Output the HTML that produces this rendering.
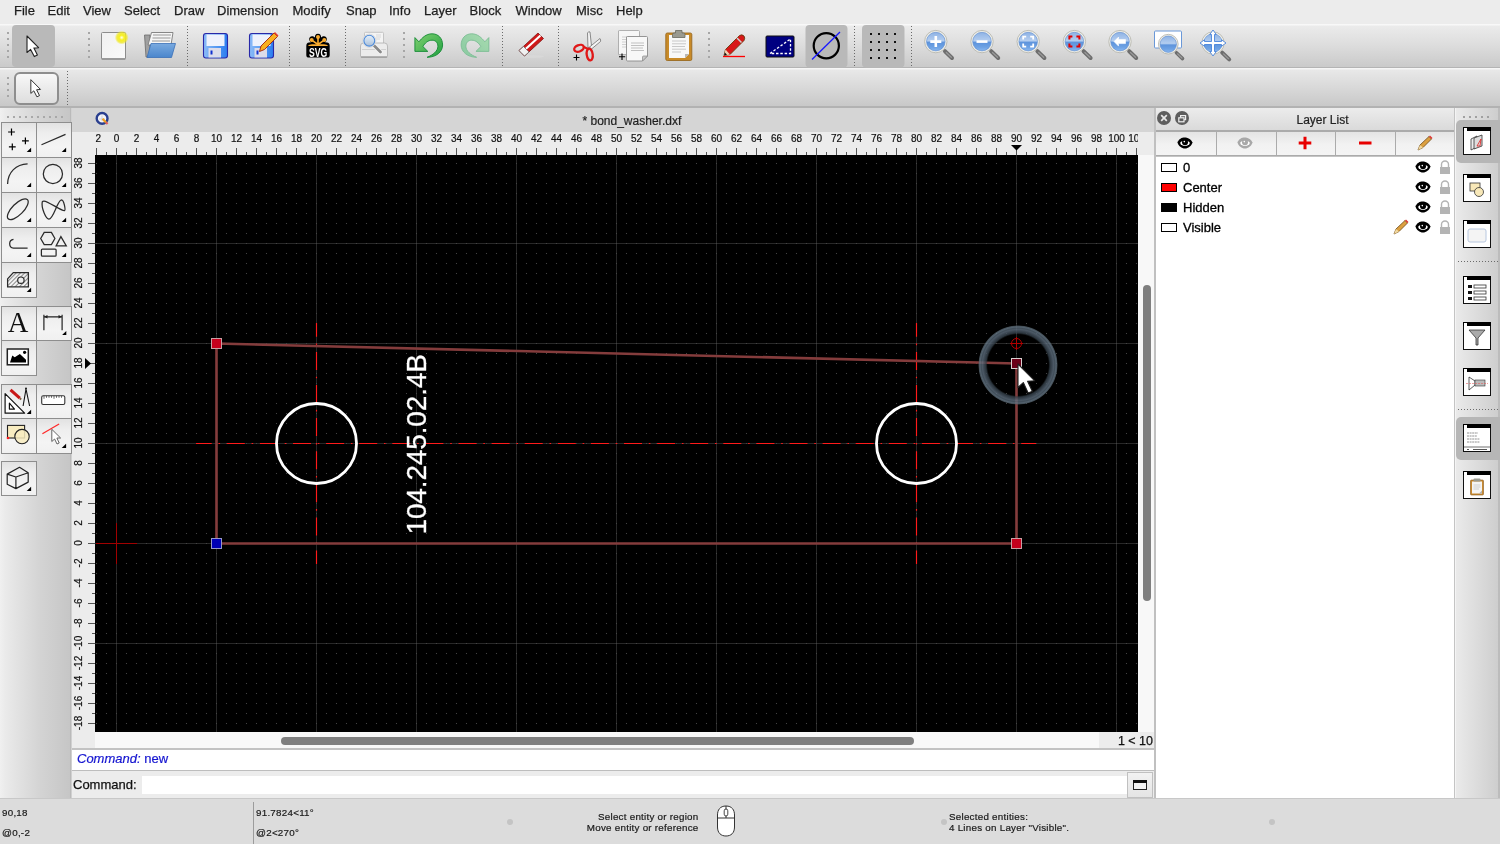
<!DOCTYPE html><html><head><meta charset="utf-8"><style>
*{box-sizing:border-box}
body{margin:0;width:1500px;height:844px;overflow:hidden;position:relative;will-change:transform;background:#ececec;font-family:"Liberation Sans",sans-serif;color:#1a1a1a}
.a{position:absolute}
.mi{position:absolute;top:2.5px;font-size:13px;line-height:16px;color:#1e1e1e;-webkit-text-stroke:0.25px #1e1e1e}
.rl{position:absolute;font-size:10px;line-height:10px;color:#111;text-align:center;width:30px;-webkit-text-stroke:0.2px #111}
.tb{position:absolute;width:34px;height:34px;border:1px solid #9c9c9c;background:linear-gradient(#e4e4e4,#f6f6f6 45%,#f3f3f3 80%,#ececec)}
.tb svg{position:absolute;left:0;top:0}
.sb{position:absolute;font-size:9.8px;line-height:11px;color:#1a1a1a;letter-spacing:0.25px;-webkit-text-stroke:0.2px #1a1a1a}

</style></head><body>
<div class="a" style="left:0;top:0;width:1500px;height:24px;background:#ececec"></div>
<div class="mi" style="left:14px">File</div>
<div class="mi" style="left:47.5px">Edit</div>
<div class="mi" style="left:83px">View</div>
<div class="mi" style="left:124px">Select</div>
<div class="mi" style="left:174px">Draw</div>
<div class="mi" style="left:217px">Dimension</div>
<div class="mi" style="left:292.5px">Modify</div>
<div class="mi" style="left:346px">Snap</div>
<div class="mi" style="left:389px">Info</div>
<div class="mi" style="left:424px">Layer</div>
<div class="mi" style="left:469.5px">Block</div>
<div class="mi" style="left:515.5px">Window</div>
<div class="mi" style="left:576px">Misc</div>
<div class="mi" style="left:616px">Help</div>
<div class="a" style="left:0;top:24px;width:1500px;height:44px;background:linear-gradient(#f8f8f8 0,#f8f8f8 1px,#ebebeb 2px,#dedede 45%,#cacaca 97%,#b4b4b4 97%)"></div>
<div class="a" style="left:0;top:68px;width:1500px;height:40px;background:linear-gradient(#f6f6f6 0,#f6f6f6 1px,#e8e8e8 2px,#dadada 45%,#c8c8c8 96%,#b2b2b2 96%)"></div>
<div class="a" style="left:7px;top:32px;width:2px;height:2px;background:#a6a6a6"></div>
<div class="a" style="left:7px;top:38px;width:2px;height:2px;background:#a6a6a6"></div>
<div class="a" style="left:7px;top:44px;width:2px;height:2px;background:#a6a6a6"></div>
<div class="a" style="left:7px;top:50px;width:2px;height:2px;background:#a6a6a6"></div>
<div class="a" style="left:7px;top:56px;width:2px;height:2px;background:#a6a6a6"></div>
<div class="a" style="left:12px;top:25px;width:43px;height:42px;border-radius:4px;background:#b9b9b9"></div>
<svg class="a" style="left:25px;top:34px" width="20" height="24" viewBox="0 0 20 24"><path d="M2 2 L2 18.5 L5.6 15.4 L9.3 22.6 L12.4 21.1 L8.9 14.1 L13.6 13.7 Z" fill="#fff" stroke="#222" stroke-width="1.1" stroke-linejoin="round"/></svg>
<div class="a" style="left:88px;top:32px;width:2px;height:2px;background:#a6a6a6"></div>
<div class="a" style="left:88px;top:38px;width:2px;height:2px;background:#a6a6a6"></div>
<div class="a" style="left:88px;top:44px;width:2px;height:2px;background:#a6a6a6"></div>
<div class="a" style="left:88px;top:50px;width:2px;height:2px;background:#a6a6a6"></div>
<div class="a" style="left:88px;top:56px;width:2px;height:2px;background:#a6a6a6"></div>
<div class="a" style="left:403px;top:32px;width:2px;height:2px;background:#a6a6a6"></div>
<div class="a" style="left:403px;top:38px;width:2px;height:2px;background:#a6a6a6"></div>
<div class="a" style="left:403px;top:44px;width:2px;height:2px;background:#a6a6a6"></div>
<div class="a" style="left:403px;top:50px;width:2px;height:2px;background:#a6a6a6"></div>
<div class="a" style="left:403px;top:56px;width:2px;height:2px;background:#a6a6a6"></div>
<div class="a" style="left:708px;top:32px;width:2px;height:2px;background:#a6a6a6"></div>
<div class="a" style="left:708px;top:38px;width:2px;height:2px;background:#a6a6a6"></div>
<div class="a" style="left:708px;top:44px;width:2px;height:2px;background:#a6a6a6"></div>
<div class="a" style="left:708px;top:50px;width:2px;height:2px;background:#a6a6a6"></div>
<div class="a" style="left:708px;top:56px;width:2px;height:2px;background:#a6a6a6"></div>
<div class="a" style="left:187px;top:26px;width:1px;height:41px;background:repeating-linear-gradient(#6a6a6a 0 1px,transparent 1px 3px)"></div>
<div class="a" style="left:289px;top:26px;width:1px;height:41px;background:repeating-linear-gradient(#6a6a6a 0 1px,transparent 1px 3px)"></div>
<div class="a" style="left:345px;top:26px;width:1px;height:41px;background:repeating-linear-gradient(#6a6a6a 0 1px,transparent 1px 3px)"></div>
<div class="a" style="left:502px;top:26px;width:1px;height:41px;background:repeating-linear-gradient(#6a6a6a 0 1px,transparent 1px 3px)"></div>
<div class="a" style="left:558px;top:26px;width:1px;height:41px;background:repeating-linear-gradient(#6a6a6a 0 1px,transparent 1px 3px)"></div>
<div class="a" style="left:854px;top:26px;width:1px;height:41px;background:repeating-linear-gradient(#6a6a6a 0 1px,transparent 1px 3px)"></div>
<div class="a" style="left:911px;top:26px;width:1px;height:41px;background:repeating-linear-gradient(#6a6a6a 0 1px,transparent 1px 3px)"></div>
<svg class="a" style="left:0;top:0" width="1500" height="108" viewBox="0 0 1500 108"><defs><radialGradient id="glow"><stop offset="0" stop-color="#fffff0"/><stop offset="0.35" stop-color="#f8f020"/><stop offset="0.7" stop-color="#f0e820" stop-opacity="0.8"/><stop offset="1" stop-color="#f0e820" stop-opacity="0"/></radialGradient><linearGradient id="paper" x1="0" y1="0" x2="1" y2="1"><stop offset="0" stop-color="#f0f0f0"/><stop offset="1" stop-color="#fafafa"/></linearGradient><linearGradient id="fold" x1="0" y1="0" x2="0" y2="1"><stop offset="0" stop-color="#7aaae0"/><stop offset="1" stop-color="#4a86cc"/></linearGradient><linearGradient id="flop" x1="0" y1="0" x2="1" y2="0"><stop offset="0" stop-color="#8cbcf8"/><stop offset="0.5" stop-color="#5a9cf2"/><stop offset="1" stop-color="#2a7cf0"/></linearGradient><linearGradient id="lens" x1="0" y1="0" x2="0" y2="1"><stop offset="0" stop-color="#8eb2e4"/><stop offset="0.45" stop-color="#b4cef0"/><stop offset="0.55" stop-color="#5e94dc"/><stop offset="0.8" stop-color="#6ea2e4"/><stop offset="1" stop-color="#8ab8f0"/></linearGradient><linearGradient id="green1" x1="0" y1="0" x2="1" y2="1"><stop offset="0" stop-color="#80d070"/><stop offset="1" stop-color="#20a040"/></linearGradient><linearGradient id="green2" x1="0" y1="0" x2="1" y2="1"><stop offset="0" stop-color="#a8dcb0"/><stop offset="1" stop-color="#88c8a0"/></linearGradient></defs><rect x="101.5" y="32.5" width="24" height="27" rx="1" fill="url(#paper)" stroke="#8c8c8c" stroke-width="1"/><rect x="102" y="58" width="23" height="2" fill="#9a9a9a"/><circle cx="121.7" cy="37.6" r="7" fill="url(#glow)"/><path d="M144.5 35 L150 35 L150 57 L146 57Z" fill="#a0a0a0" stroke="#6a6a6a" stroke-width="0.8"/><path d="M151.5 32.5 L173 32.5 L171 45 L148 45Z" fill="#f6f6f6" stroke="#7a7a7a" stroke-width="0.9"/><path d="M153 35 L171 35 M152.5 38 L170.5 38 M152 41 L170 41" stroke="#b8b8b8" stroke-width="1.6"/><path d="M151 43.5 L175.5 43.5 L171.5 57.5 L147 57.5Z" fill="url(#fold)" stroke="#3a70b8" stroke-width="0.8"/><rect x="203.5" y="33.5" width="24" height="24.5" rx="2.5" fill="url(#flop)" stroke="#2828a8" stroke-width="1.1"/><rect x="206.5" y="34.5" width="18" height="11.5" fill="#eef2fc"/><rect x="208.5" y="48" width="12.5" height="9.5" fill="#dcdcea"/><rect x="210.5" y="50.5" width="2" height="4" fill="#1030d0"/><rect x="249.5" y="33.5" width="24" height="24.5" rx="2.5" fill="url(#flop)" stroke="#2828a8" stroke-width="1.1"/><rect x="252.5" y="34.5" width="18" height="11.5" fill="#eef2fc"/><rect x="254.5" y="48" width="12.5" height="9.5" fill="#dcdcea"/><rect x="256.5" y="50.5" width="2" height="4" fill="#1030d0"/><path d="M259.5 51.5 L261 46 L274 33 L277.5 36.5 L264.5 49.5Z" fill="#f8b020" stroke="#a02010" stroke-width="0.9"/><path d="M274 33 L277.5 36.5 L278.5 35.5 L275 32Z" fill="#e84030"/><path d="M318 33.8 C320.5 33.8 321.3 36 321 37.6 L322.5 36.6 C324.5 35.4 327.4 37 326.8 39.8 C326.6 41 325.8 41.8 325 42.3 L327 42.6 Q329.7 43 329.7 46 L329.7 55 Q329.7 57.6 327 57.6 L309 57.6 Q306.3 57.6 306.3 55 L306.3 46 Q306.3 43 309 42.6 L311 42.3 C310.2 41.8 309.4 41 309.2 39.8 C308.6 37 311.5 35.4 313.5 36.6 L315 37.6 C314.7 36 315.5 33.8 318 33.8Z" fill="#000"/><g stroke="#f8ac30" stroke-linecap="round"><path d="M318 44.5 L318 37 M318 44.5 L311.8 40.2 M318 44.5 L324.2 40.2" stroke-width="1.6"/><circle cx="318" cy="36.9" r="1.2" stroke-width="1.6" fill="#f8ac30"/><circle cx="311.7" cy="40" r="1.2" stroke-width="1.6" fill="#f8ac30"/><circle cx="324.3" cy="40" r="1.2" stroke-width="1.6" fill="#f8ac30"/></g><path d="M307.8 46 Q309 44.2 312 44.2 L324 44.2 Q327 44.2 328.3 46Z" fill="#f8ac30"/><text x="318" y="57" font-family="Liberation Sans" font-weight="bold" font-size="13.6" text-anchor="middle" fill="#fff" textLength="18.2" lengthAdjust="spacingAndGlyphs">SVG</text><linearGradient id="lens2" x1="0" y1="0" x2="0" y2="1"><stop offset="0" stop-color="#e4eef8"/><stop offset="0.55" stop-color="#c4d6ea"/><stop offset="1" stop-color="#a8bcd4"/></linearGradient><rect x="364.5" y="32.3" width="19" height="14" rx="1" fill="#f4f4f4" stroke="#c4c4c4" stroke-width="1"/><path d="M376 35 H381 M376 37 H381 M376 39 H380" stroke="#d8d8d8" stroke-width="1"/><path d="M360.5 46 Q360.5 43 363.5 43 L384.5 43 Q387.5 43 387.5 46 L387.5 56.5 Q387.5 57.5 386.5 57.5 L361.5 57.5 Q360.5 57.5 360.5 56.5Z" fill="#ececec" stroke="#b4b4b4" stroke-width="0.9"/><rect x="362" y="49" width="24" height="1" fill="#d0d0d0"/><rect x="361" y="56" width="26" height="2" fill="#9a9a9a" opacity="0.7"/><path d="M374 45.5 L380.5 52" stroke="#f4f4f4" stroke-width="4.4" stroke-linecap="round"/><path d="M374 45.5 L380.5 52" stroke="#8a8a8a" stroke-width="2.8" stroke-linecap="round"/><circle cx="369.3" cy="40.7" r="6.6" fill="#f8f8f8" stroke="#d0d0d0" stroke-width="0.8"/><circle cx="369.3" cy="40.7" r="5.4" fill="url(#lens2)" stroke="#4a88d8" stroke-width="1.1"/><path d="M414.9 37.6 L418.9 41.8 C422 38 426 33.8 432 33.8 C438.5 33.8 442.6 38.5 442.6 45 C442.6 52 436 57.3 427.1 57.3 C433 55 437.9 51 437.9 46.3 C437.9 42.5 435.5 40.2 432 40.2 C428 40.2 425 43 422.9 46.5 L427.8 51.4 L414.9 51.4 Z" fill="url(#green1)" stroke="#148a34" stroke-width="0.9" stroke-linejoin="round"/><path d="M414.9 37.6 L418.9 41.8 C422 38 426 33.8 432 33.8 C438.5 33.8 442.6 38.5 442.6 45 C442.6 52 436 57.3 427.1 57.3 C433 55 437.9 51 437.9 46.3 C437.9 42.5 435.5 40.2 432 40.2 C428 40.2 425 43 422.9 46.5 L427.8 51.4 L414.9 51.4 Z" transform="translate(903.75 0) scale(-1 1)" fill="url(#green2)" stroke="#7cbc94" stroke-width="0.9" stroke-linejoin="round"/><ellipse cx="532" cy="56.5" rx="12" ry="1.5" fill="#d8d8d8"/><path d="M519 50.5 L538 33 L543.5 38.5 L524.5 56Z" fill="#d01818" stroke="#801010" stroke-width="0.8"/><path d="M521.5 52.8 L540.5 35.5" stroke="#fff" stroke-width="2.2"/><path d="M519 50.5 L523.5 46.5 L529 52 L524.5 56Z" fill="#f0f0f0" stroke="#707070" stroke-width="0.8"/><path d="M588 48 L587.5 33 Q588.5 31 590 32 L591.5 46Z" fill="#f4f4f4" stroke="#707070" stroke-width="0.8"/><path d="M589.5 47 L600 38.5 Q601 40 600.5 41.5 L591.5 49Z" fill="#f4f4f4" stroke="#707070" stroke-width="0.8"/><ellipse cx="579" cy="48.3" rx="5" ry="3.2" transform="rotate(-22 579 48.3)" fill="none" stroke="#e01818" stroke-width="2.3"/><ellipse cx="589.7" cy="54.5" rx="3" ry="6" transform="rotate(-8 589.7 54.5)" fill="none" stroke="#e01818" stroke-width="2.3"/><path d="M583 46.5 L589 49.5" stroke="#e01818" stroke-width="2"/><path d="M576.5 54.5 V60.5 M573.5 57.5 H579.5" stroke="#000" stroke-width="1.1"/><path d="M618.5 31 Q618.5 30.5 619.5 30.5 L638.5 30.5 Q639.5 30.5 639.5 31.5 L639.5 54.5 L618.5 54.5Z" fill="#f6f6f6" stroke="#a8a8a8" stroke-width="0.9"/><path d="M622 37 H634 M622 39.5 H634 M622 42 H634 M622 44.5 H634 M622 47 H634" stroke="#d0d0d0" stroke-width="1"/><path d="M626.5 37 Q626.5 36.5 627.5 36.5 L646.5 36.5 Q647.5 36.5 647.5 37.5 L647.5 56 L642.5 61 L627.5 61 Q626.5 61 626.5 60Z" fill="#f8f8f8" stroke="#8a8a8a" stroke-width="0.9"/><path d="M642.5 61 L642.5 57 Q642.5 56 643.5 56 L647.5 56Z" fill="#c8c8c8" stroke="#8a8a8a" stroke-width="0.7"/><path d="M631 43 H644 M631 45.5 H644 M631 48 H643 M631 50.5 H644" stroke="#c0c0c0" stroke-width="1.1"/><path d="M622 53.5 V60 M619 56.8 H625.2" stroke="#000" stroke-width="1.1"/><rect x="665.8" y="33" width="26" height="27.5" rx="1.5" fill="#c88a28" stroke="#9a6a20" stroke-width="0.9"/><path d="M669 35 L689 35 L689 54 L685 58 L669 58Z" fill="#f8f8f8"/><path d="M685 58 L685 54 L689 54Z" fill="#b8b8b8"/><path d="M672 41 H686 M672 43.8 H686 M672 46.5 H685 M672 49.2 H686 M672 52 H681" stroke="#c8c8c8" stroke-width="1"/><path d="M672.5 37.5 L672.5 34.5 Q672.5 33 674 33 L675.5 33 L675.5 30.5 L682 30.5 L682 33 L683.5 33 Q685 33 685 34.5 L685 37.5Z" fill="#9a9a90" stroke="#6a6a60" stroke-width="0.8"/><path d="M723 56.5 H745" stroke="#ff0000" stroke-width="1.3"/><path d="M724 55.5 L725.5 49.5 L739.5 35.5 Q742 34 744 36 Q745.5 38 744 40.5 L730 54.5Z" fill="#d81818" stroke="#6a3a10" stroke-width="0.9"/><path d="M725.5 49.5 L730 54.5 L724 55.5Z" fill="#f0d0b0"/><path d="M724 55.5 L724.8 52.5 L727 54.8Z" fill="#111"/><path d="M737 38 L741.5 42.5" stroke="#d0d0d0" stroke-width="1.5"/><rect x="766" y="36" width="28" height="21" rx="1" fill="#000080" stroke="#111" stroke-width="1"/><path d="M770 53.5 L790.5 39 L790.5 53.5 Z" fill="none" stroke="#fff" stroke-width="1.3" stroke-dasharray="2.5 1.8"/><rect x="805.5" y="25" width="42" height="42.5" rx="4" fill="#b9b9b9"/><rect x="862" y="25" width="42.5" height="42.5" rx="4" fill="#b9b9b9"/><circle cx="826.3" cy="45.7" r="12.6" fill="none" stroke="#000" stroke-width="2.2"/><path d="M812 59.5 L840 32" stroke="#1818ff" stroke-width="1.3"/><rect x="870" y="33" width="2" height="2" fill="#111"/><rect x="878" y="33" width="2" height="2" fill="#111"/><rect x="886" y="33" width="2" height="2" fill="#111"/><rect x="894" y="33" width="2" height="2" fill="#111"/><rect x="870" y="41" width="2" height="2" fill="#111"/><rect x="878" y="41" width="2" height="2" fill="#111"/><rect x="886" y="41" width="2" height="2" fill="#111"/><rect x="894" y="41" width="2" height="2" fill="#111"/><rect x="870" y="49" width="2" height="2" fill="#111"/><rect x="878" y="49" width="2" height="2" fill="#111"/><rect x="886" y="49" width="2" height="2" fill="#111"/><rect x="894" y="49" width="2" height="2" fill="#111"/><rect x="870" y="57" width="2" height="2" fill="#111"/><rect x="878" y="57" width="2" height="2" fill="#111"/><rect x="886" y="57" width="2" height="2" fill="#111"/><rect x="894" y="57" width="2" height="2" fill="#111"/><path d="M945.0 51.2 L952.0 58.0" stroke="#6e6e6e" stroke-width="4.0" stroke-linecap="round"/><path d="M946.3 52.5 L951.3 57.3" stroke="#9a9a9a" stroke-width="1.2" stroke-linecap="round"/><circle cx="935.8" cy="41.6" r="11.2" fill="#eeeee8" stroke="#b8b8b0" stroke-width="0.9"/><circle cx="935.8" cy="41.6" r="9.3" fill="url(#lens)" stroke="#5a8ad0" stroke-width="0.6"/><path d="M935.8 36.1 V47.1 M930.3 41.6 H941.3" stroke="#fff" stroke-width="2.6"/><path d="M991.2 51.2 L998.2 58.0" stroke="#6e6e6e" stroke-width="4.0" stroke-linecap="round"/><path d="M992.5 52.5 L997.5 57.3" stroke="#9a9a9a" stroke-width="1.2" stroke-linecap="round"/><circle cx="982.0" cy="41.6" r="11.2" fill="#eeeee8" stroke="#b8b8b0" stroke-width="0.9"/><circle cx="982.0" cy="41.6" r="9.3" fill="url(#lens)" stroke="#5a8ad0" stroke-width="0.6"/><path d="M976.5 41.6 H987.5" stroke="#fff" stroke-width="2.6"/><path d="M1037.4 51.2 L1044.4 58.0" stroke="#6e6e6e" stroke-width="4.0" stroke-linecap="round"/><path d="M1038.7 52.5 L1043.7 57.3" stroke="#9a9a9a" stroke-width="1.2" stroke-linecap="round"/><circle cx="1028.2" cy="41.6" r="11.2" fill="#eeeee8" stroke="#b8b8b0" stroke-width="0.9"/><circle cx="1028.2" cy="41.6" r="9.3" fill="url(#lens)" stroke="#5a8ad0" stroke-width="0.6"/><path d="M1023.2 39.6 V36.6 H1026.2 M1030.2 36.6 H1033.2 V39.6 M1033.2 43.6 V46.6 H1030.2 M1026.2 46.6 H1023.2 V43.6" fill="none" stroke="#fff" stroke-width="1.8"/><path d="M1083.6000000000001 51.2 L1090.6000000000001 58.0" stroke="#6e6e6e" stroke-width="4.0" stroke-linecap="round"/><path d="M1084.9 52.5 L1089.9 57.3" stroke="#9a9a9a" stroke-width="1.2" stroke-linecap="round"/><circle cx="1074.4" cy="41.6" r="11.2" fill="#eeeee8" stroke="#b8b8b0" stroke-width="0.9"/><circle cx="1074.4" cy="41.6" r="9.3" fill="url(#lens)" stroke="#5a8ad0" stroke-width="0.6"/><path d="M1069.4 39.6 V36.6 H1072.4 M1076.4 36.6 H1079.4 V39.6 M1079.4 43.6 V46.6 H1076.4 M1072.4 46.6 H1069.4 V43.6" fill="none" stroke="#e00000" stroke-width="2"/><path d="M1129.2 51.2 L1136.2 58.0" stroke="#6e6e6e" stroke-width="4.0" stroke-linecap="round"/><path d="M1130.5 52.5 L1135.5 57.3" stroke="#9a9a9a" stroke-width="1.2" stroke-linecap="round"/><circle cx="1120" cy="41.6" r="11.2" fill="#eeeee8" stroke="#b8b8b0" stroke-width="0.9"/><circle cx="1120" cy="41.6" r="9.3" fill="url(#lens)" stroke="#5a8ad0" stroke-width="0.6"/><path d="M1114 41.6 L1118.5 37.1 V39.6 H1125.5 V43.6 H1118.5 V46.1Z" fill="#fff" stroke="#fff" stroke-width="0.6"/><rect x="1154.5" y="31" width="27" height="17" rx="1" fill="#fff" stroke="#6a98d8" stroke-width="1"/><path d="M1176.396 52.648 L1182.556 58.632000000000005" stroke="#6e6e6e" stroke-width="3.52" stroke-linecap="round"/><path d="M1177.54 53.792 L1181.94 58.016000000000005" stroke="#9a9a9a" stroke-width="1.2" stroke-linecap="round"/><circle cx="1168.3" cy="44.2" r="9.856" fill="#eeeee8" stroke="#b8b8b0" stroke-width="0.9"/><circle cx="1168.3" cy="44.2" r="8.184000000000001" fill="url(#lens)" stroke="#5a8ad0" stroke-width="0.6"/><path d="M1222.2 52.6 L1229.2 59.4" stroke="#6e6e6e" stroke-width="4.0" stroke-linecap="round"/><path d="M1223.5 53.9 L1228.5 58.7" stroke="#9a9a9a" stroke-width="1.2" stroke-linecap="round"/><circle cx="1213" cy="43" r="11.2" fill="#eeeee8" stroke="#b8b8b0" stroke-width="0.9"/><circle cx="1213" cy="43" r="9.3" fill="url(#lens)" stroke="#5a8ad0" stroke-width="0.6"/><path d="M1213 30 L1216.2 34.5 L1214.5 34.5 L1214.5 41.5 L1221.5 41.5 L1221.5 39.8 L1226 43 L1221.5 46.2 L1221.5 44.5 L1214.5 44.5 L1214.5 51.5 L1216.2 51.5 L1213 56 L1209.8 51.5 L1211.5 51.5 L1211.5 44.5 L1204.5 44.5 L1204.5 46.2 L1200 43 L1204.5 39.8 L1204.5 41.5 L1211.5 41.5 L1211.5 34.5 L1209.8 34.5Z" fill="#fff" stroke="#3a7ad8" stroke-width="0.8" stroke-linejoin="round"/></svg>
<div class="a" style="left:7px;top:77px;width:2px;height:2px;background:#a6a6a6"></div>
<div class="a" style="left:7px;top:83px;width:2px;height:2px;background:#a6a6a6"></div>
<div class="a" style="left:7px;top:89px;width:2px;height:2px;background:#a6a6a6"></div>
<div class="a" style="left:7px;top:95px;width:2px;height:2px;background:#a6a6a6"></div>
<div class="a" style="left:14px;top:72px;width:45px;height:33px;border-radius:6px;border:2px solid #8e8e8e;background:linear-gradient(#f8f8f8,#e8e8e8 60%,#dedede)"></div>
<svg class="a" style="left:29px;top:78px" width="17" height="20" viewBox="0 0 20 24"><path d="M2 2 L2 18.5 L5.6 15.4 L9.3 22.6 L12.4 21.1 L8.9 14.1 L13.6 13.7 Z" fill="#fff" stroke="#222" stroke-width="1.1" stroke-linejoin="round"/></svg>
<div class="a" style="left:67px;top:71px;width:1px;height:35px;background:repeating-linear-gradient(#6a6a6a 0 1px,transparent 1px 3px)"></div>
<div class="a" style="left:0;top:108px;width:71px;height:690px;background:linear-gradient(90deg,#f0f0f0,#eaeaea 8%,#d4d4d4 55%,#c6c6c6 98%,#bababa 98%)"></div>
<div class="a" style="left:71px;top:108px;width:1px;height:690px;background:#d0d0d0"></div>
<div class="a" style="left:7px;top:116px;width:2px;height:2px;background:#a8a8a8"></div>
<div class="a" style="left:13px;top:116px;width:2px;height:2px;background:#a8a8a8"></div>
<div class="a" style="left:19px;top:116px;width:2px;height:2px;background:#a8a8a8"></div>
<div class="a" style="left:25px;top:116px;width:2px;height:2px;background:#a8a8a8"></div>
<div class="a" style="left:31px;top:116px;width:2px;height:2px;background:#a8a8a8"></div>
<div class="a" style="left:37px;top:116px;width:2px;height:2px;background:#a8a8a8"></div>
<div class="a" style="left:43px;top:116px;width:2px;height:2px;background:#a8a8a8"></div>
<div class="a" style="left:49px;top:116px;width:2px;height:2px;background:#a8a8a8"></div>
<div class="a" style="left:55px;top:116px;width:2px;height:2px;background:#a8a8a8"></div>
<div class="a" style="left:61px;top:116px;width:2px;height:2px;background:#a8a8a8"></div>
<div class="a" style="left:1px;top:121.5px;width:36px;height:36.5px;border:1.5px solid #8e8e8e;background:linear-gradient(#e2e2e2,#eeeeee 30%,#f4f4f4 70%,#f0f0f0)"></div>
<svg class="a" style="left:1px;top:121.5px" width="36" height="36" viewBox="0 0 36 36"><path d="M7.1 10H13.9M10.5 6.6V13.4M21.0 18.9H27.799999999999997M24.4 15.499999999999998V22.299999999999997M7.9 24.9H14.700000000000001M11.3 21.5V28.299999999999997" stroke="#000" stroke-width="1.2"/><path d="M25.7 30.1 L30.1 25.7 L30.1 30.1 Z" fill="#000"/></svg>
<div class="a" style="left:35.5px;top:121.5px;width:36px;height:36.5px;border:1.5px solid #8e8e8e;background:linear-gradient(#e2e2e2,#eeeeee 30%,#f4f4f4 70%,#f0f0f0)"></div>
<svg class="a" style="left:35.5px;top:121.5px" width="36" height="36" viewBox="0 0 36 36"><path d="M5.5 22.7 L29.5 12.4" fill="none" stroke="#2a2a2a" stroke-width="1.25"/><path d="M25.7 30.1 L30.1 25.7 L30.1 30.1 Z" fill="#000"/></svg>
<div class="a" style="left:1px;top:156.5px;width:36px;height:36.5px;border:1.5px solid #8e8e8e;background:linear-gradient(#e2e2e2,#eeeeee 30%,#f4f4f4 70%,#f0f0f0)"></div>
<svg class="a" style="left:1px;top:156.5px" width="36" height="36" viewBox="0 0 36 36"><path d="M6.6 26.9 C7 15 15 7.5 26.6 6.9" fill="none" stroke="#2a2a2a" stroke-width="1.25"/><path d="M25.7 30.1 L30.1 25.7 L30.1 30.1 Z" fill="#000"/></svg>
<div class="a" style="left:35.5px;top:156.5px;width:36px;height:36.5px;border:1.5px solid #8e8e8e;background:linear-gradient(#e2e2e2,#eeeeee 30%,#f4f4f4 70%,#f0f0f0)"></div>
<svg class="a" style="left:35.5px;top:156.5px" width="36" height="36" viewBox="0 0 36 36"><circle cx="16.9" cy="16.9" r="9.6" fill="none" stroke="#2a2a2a" stroke-width="1.25"/><path d="M25.7 30.1 L30.1 25.7 L30.1 30.1 Z" fill="#000"/></svg>
<div class="a" style="left:1px;top:191.5px;width:36px;height:36.5px;border:1.5px solid #8e8e8e;background:linear-gradient(#e2e2e2,#eeeeee 30%,#f4f4f4 70%,#f0f0f0)"></div>
<svg class="a" style="left:1px;top:191.5px" width="36" height="36" viewBox="0 0 36 36"><ellipse cx="16.8" cy="17.2" rx="13.6" ry="5.6" transform="rotate(-45 16.8 17.2)" fill="none" stroke="#2a2a2a" stroke-width="1.25"/><path d="M25.7 30.1 L30.1 25.7 L30.1 30.1 Z" fill="#000"/></svg>
<div class="a" style="left:35.5px;top:191.5px;width:36px;height:36.5px;border:1.5px solid #8e8e8e;background:linear-gradient(#e2e2e2,#eeeeee 30%,#f4f4f4 70%,#f0f0f0)"></div>
<svg class="a" style="left:35.5px;top:191.5px" width="36" height="36" viewBox="0 0 36 36"><path d="M6.3 9.7 C5 16 10 27.1 12.9 27.1 C16 27.1 19 18 21 14 C23 10 24 7.9 25.5 7.9 C28 8 29.8 18 28.5 18.6 C26 19.5 12 9 8 9 C7 9 6.5 9.3 6.3 9.7Z" fill="none" stroke="#2a2a2a" stroke-width="1.25"/><path d="M25.7 30.1 L30.1 25.7 L30.1 30.1 Z" fill="#000"/></svg>
<div class="a" style="left:1px;top:226.5px;width:36px;height:36.5px;border:1.5px solid #8e8e8e;background:linear-gradient(#e2e2e2,#eeeeee 30%,#f4f4f4 70%,#f0f0f0)"></div>
<svg class="a" style="left:1px;top:226.5px" width="36" height="36" viewBox="0 0 36 36"><path d="M12.5 12.3 A4.5 4.5 0 0 0 12.5 21.2 L26.6 21.2" fill="none" stroke="#2a2a2a" stroke-width="1.25"/><path d="M25.7 30.1 L30.1 25.7 L30.1 30.1 Z" fill="#000"/></svg>
<div class="a" style="left:35.5px;top:226.5px;width:36px;height:36.5px;border:1.5px solid #8e8e8e;background:linear-gradient(#e2e2e2,#eeeeee 30%,#f4f4f4 70%,#f0f0f0)"></div>
<svg class="a" style="left:35.5px;top:226.5px" width="36" height="36" viewBox="0 0 36 36"><path d="M8.2 5.4 L15.4 5.4 L18.9 11.5 L15.4 17.6 L8.2 17.6 L4.7 11.5Z M24.9 9.6 L30.3 18.9 L20.1 18.9Z" fill="none" stroke="#2a2a2a" stroke-width="1.25"/><rect x="5.4" y="22.1" width="14.7" height="7.1" rx="1" fill="none" stroke="#2a2a2a" stroke-width="1.25"/><path d="M25.7 30.1 L30.1 25.7 L30.1 30.1 Z" fill="#000"/></svg>
<div class="a" style="left:1px;top:261.5px;width:36px;height:36.5px;border:1.5px solid #8e8e8e;background:linear-gradient(#e2e2e2,#eeeeee 30%,#f4f4f4 70%,#f0f0f0)"></div>
<svg class="a" style="left:1px;top:261.5px" width="36" height="36" viewBox="0 0 36 36"><defs><pattern id="htc" width="3" height="3" patternUnits="userSpaceOnUse" patternTransform="rotate(45)"><rect x="0" y="0" width="1" height="3" fill="#8a8a8a"/></pattern></defs><path d="M6.6 16.8 L12.3 10.6 L27.4 10.6 L27.4 24.8 L6.6 24.8Z" fill="url(#htc)" stroke="#2a2a2a" stroke-width="1.25"/><circle cx="19.9" cy="18.2" r="3.2" fill="#eeeeee" stroke="#2a2a2a" stroke-width="1.2"/><path d="M25.7 30.1 L30.1 25.7 L30.1 30.1 Z" fill="#000"/></svg>
<div class="a" style="left:1px;top:305.5px;width:36px;height:35.5px;border:1.2px solid #8e8e8e;background:linear-gradient(#e2e2e2,#eeeeee 30%,#f4f4f4 70%,#f0f0f0)"></div>
<svg class="a" style="left:1px;top:305.5px" width="36" height="36" viewBox="0 0 36 36"><text x="17" y="26.2" font-family="Liberation Serif" font-size="28.5" text-anchor="middle" fill="#111">A</text></svg>
<div class="a" style="left:35.5px;top:305.5px;width:36px;height:35.5px;border:1.2px solid #8e8e8e;background:linear-gradient(#e2e2e2,#eeeeee 30%,#f4f4f4 70%,#f0f0f0)"></div>
<svg class="a" style="left:35.5px;top:305.5px" width="36" height="36" viewBox="0 0 36 36"><path d="M7.9 8.7 V24.3 M26.1 8.7 V24.3 M8.5 10.8 H25.5" stroke="#222" stroke-width="1.2"/><path d="M8 10.8 L11.5 9 V12.6Z M26 10.8 L22.5 9 V12.6Z" fill="#222"/><path d="M26.1 29.1 L30.3 25 L30.3 29.1Z" fill="#000"/></svg>
<div class="a" style="left:1px;top:340px;width:36px;height:35.5px;border:1.2px solid #8e8e8e;background:linear-gradient(#e2e2e2,#eeeeee 30%,#f4f4f4 70%,#f0f0f0)"></div>
<svg class="a" style="left:1px;top:340px" width="36" height="36" viewBox="0 0 36 36"><rect x="6.3" y="9" width="21" height="15.8" fill="#fff" stroke="#222" stroke-width="1.5"/><path d="M9 22.5 L11.3 15.4 L13.7 17.3 L18.9 14 L25 19.7 L25 22.5Z" fill="#000"/><circle cx="23.6" cy="12.3" r="1.6" fill="#000"/></svg>
<div class="a" style="left:1px;top:383.5px;width:36px;height:35px;border:1.5px solid #8e8e8e;background:linear-gradient(#e2e2e2,#eeeeee 30%,#f4f4f4 70%,#f0f0f0)"></div>
<svg class="a" style="left:1px;top:383.5px" width="36" height="36" viewBox="0 0 36 36"><path d="M4.1 9.7 L4.1 29.2 L23.6 29.2Z M8.4 19.1 L8.4 25.1 L13.5 25.1Z" fill="#fff" stroke="#111" stroke-width="1.2" stroke-linejoin="round"/><path d="M9.5 5.8 L18.8 14.2" stroke="#c81818" stroke-width="3"/><path d="M18.8 14.2 L20.2 15.4" stroke="#806040" stroke-width="2"/><path d="M22.1 22 L25 5 L28.6 22" fill="none" stroke="#111" stroke-width="1.1"/><circle cx="25" cy="4.6" r="1" fill="#111"/><path d="M25.7 30.1 L30.1 25.7 L30.1 30.1 Z" fill="#000"/></svg>
<div class="a" style="left:35.5px;top:383.5px;width:36px;height:35px;border:1.5px solid #8e8e8e;background:linear-gradient(#e2e2e2,#eeeeee 30%,#f4f4f4 70%,#f0f0f0)"></div>
<svg class="a" style="left:35.5px;top:383.5px" width="36" height="36" viewBox="0 0 36 36"><rect x="5.7" y="11.8" width="23.1" height="8.7" rx="1.5" fill="#fff" stroke="#333" stroke-width="1.1"/><path d="M8 11.8v3M10.5 11.8v2M13 11.8v2M15.5 11.8v2M18 11.8v3M20.5 11.8v2M23 11.8v2M25.5 11.8v2" stroke="#444" stroke-width="0.8"/></svg>
<div class="a" style="left:1px;top:418px;width:36px;height:35.5px;border:1.5px solid #8e8e8e;background:linear-gradient(#e2e2e2,#eeeeee 30%,#f4f4f4 70%,#f0f0f0)"></div>
<svg class="a" style="left:1px;top:418px" width="36" height="36" viewBox="0 0 36 36"><rect x="6.5" y="7.4" width="17.1" height="12.6" fill="#f8ecc0" stroke="#222" stroke-width="1.1"/><circle cx="21" cy="18.6" r="7.2" fill="#f8ecc0" fill-opacity="0.85" stroke="#222" stroke-width="1.1"/><circle cx="7" cy="20" r="1.3" fill="#ff2020"/></svg>
<div class="a" style="left:35.5px;top:418px;width:36px;height:35.5px;border:1.5px solid #8e8e8e;background:linear-gradient(#e2e2e2,#eeeeee 30%,#f4f4f4 70%,#f0f0f0)"></div>
<svg class="a" style="left:35.5px;top:418px" width="36" height="36" viewBox="0 0 36 36"><path d="M6.4 15.7 L23.1 6" stroke="#ff2a2a" stroke-width="1.3"/><path d="M15.8 11.3 L15.8 23.5 L18.6 21 L21 26 L23.2 25 L20.9 20 L24.6 20Z" fill="#fff" stroke="#555" stroke-width="0.9" stroke-linejoin="round"/><path d="M25.7 30.1 L30.1 25.7 L30.1 30.1 Z" fill="#000"/></svg>
<div class="a" style="left:1px;top:461px;width:36px;height:35px;border:1.5px solid #8e8e8e;background:linear-gradient(#e2e2e2,#eeeeee 30%,#f4f4f4 70%,#f0f0f0)"></div>
<svg class="a" style="left:1px;top:461px" width="36" height="36" viewBox="0 0 36 36"><path d="M18.5 6.3 L6.2 13.1 L6.2 23.3 L14.9 27.6 L27.2 21.1 L27.2 11.7Z M6.2 13.1 L14.9 16 L27.2 11.7 M14.9 16 L14.9 27.6" fill="none" stroke="#222" stroke-width="1.2" stroke-linejoin="round"/><path d="M25.7 30.1 L30.1 25.7 L30.1 30.1 Z" fill="#000"/></svg>
<div class="a" style="left:72px;top:108px;width:1082px;height:24px;background:#d5d5d5"></div>
<div class="a" style="left:582.5px;top:112.5px;font-size:12px;line-height:16px;color:#1e1e1e;-webkit-text-stroke:0.2px #1e1e1e">* bond_washer.dxf</div>
<svg class="a" style="left:95px;top:111px" width="16" height="16" viewBox="0 0 16 16"><circle cx="7.1" cy="7.4" r="5.4" fill="#f4f4f8" stroke="#2a3f8f" stroke-width="2.4"/><path d="M4 8 H10 M7 4.5 V10" stroke="#c8c8d0" stroke-width="0.8"/><path d="M7.6 7.8 L11 11.4" stroke="#f0a020" stroke-width="2.2"/><path d="M11 11.4 L12.6 13" stroke="#e06060" stroke-width="2.2"/></svg>
<div class="a" style="left:72px;top:132px;width:1082px;height:600px;background:#ececec"></div>
<div class="a" style="left:95px;top:132px;width:1043px;height:23px;overflow:hidden"><div class="rl" style="left:-13.5px;top:2px">-2</div><div class="rl" style="left:6.5px;top:2px">0</div><div class="rl" style="left:26.5px;top:2px">2</div><div class="rl" style="left:46.5px;top:2px">4</div><div class="rl" style="left:66.5px;top:2px">6</div><div class="rl" style="left:86.5px;top:2px">8</div><div class="rl" style="left:106.5px;top:2px">10</div><div class="rl" style="left:126.5px;top:2px">12</div><div class="rl" style="left:146.5px;top:2px">14</div><div class="rl" style="left:166.5px;top:2px">16</div><div class="rl" style="left:186.5px;top:2px">18</div><div class="rl" style="left:206.5px;top:2px">20</div><div class="rl" style="left:226.5px;top:2px">22</div><div class="rl" style="left:246.5px;top:2px">24</div><div class="rl" style="left:266.5px;top:2px">26</div><div class="rl" style="left:286.5px;top:2px">28</div><div class="rl" style="left:306.5px;top:2px">30</div><div class="rl" style="left:326.5px;top:2px">32</div><div class="rl" style="left:346.5px;top:2px">34</div><div class="rl" style="left:366.5px;top:2px">36</div><div class="rl" style="left:386.5px;top:2px">38</div><div class="rl" style="left:406.5px;top:2px">40</div><div class="rl" style="left:426.5px;top:2px">42</div><div class="rl" style="left:446.5px;top:2px">44</div><div class="rl" style="left:466.5px;top:2px">46</div><div class="rl" style="left:486.5px;top:2px">48</div><div class="rl" style="left:506.5px;top:2px">50</div><div class="rl" style="left:526.5px;top:2px">52</div><div class="rl" style="left:546.5px;top:2px">54</div><div class="rl" style="left:566.5px;top:2px">56</div><div class="rl" style="left:586.5px;top:2px">58</div><div class="rl" style="left:606.5px;top:2px">60</div><div class="rl" style="left:626.5px;top:2px">62</div><div class="rl" style="left:646.5px;top:2px">64</div><div class="rl" style="left:666.5px;top:2px">66</div><div class="rl" style="left:686.5px;top:2px">68</div><div class="rl" style="left:706.5px;top:2px">70</div><div class="rl" style="left:726.5px;top:2px">72</div><div class="rl" style="left:746.5px;top:2px">74</div><div class="rl" style="left:766.5px;top:2px">76</div><div class="rl" style="left:786.5px;top:2px">78</div><div class="rl" style="left:806.5px;top:2px">80</div><div class="rl" style="left:826.5px;top:2px">82</div><div class="rl" style="left:846.5px;top:2px">84</div><div class="rl" style="left:866.5px;top:2px">86</div><div class="rl" style="left:886.5px;top:2px">88</div><div class="rl" style="left:906.5px;top:2px">90</div><div class="rl" style="left:926.5px;top:2px">92</div><div class="rl" style="left:946.5px;top:2px">94</div><div class="rl" style="left:966.5px;top:2px">96</div><div class="rl" style="left:986.5px;top:2px">98</div><div class="rl" style="left:1006.5px;top:2px">100</div><div class="rl" style="left:1026.5px;top:2px">102</div></div>
<svg class="a" style="left:0;top:0" width="1500" height="844"><g fill="#555"><rect x="96" y="148" width="1" height="7"/><rect x="106" y="152" width="1" height="3"/><rect x="116" y="148" width="1" height="7"/><rect x="126" y="152" width="1" height="3"/><rect x="136" y="148" width="1" height="7"/><rect x="146" y="152" width="1" height="3"/><rect x="156" y="148" width="1" height="7"/><rect x="166" y="152" width="1" height="3"/><rect x="176" y="148" width="1" height="7"/><rect x="186" y="152" width="1" height="3"/><rect x="196" y="148" width="1" height="7"/><rect x="206" y="152" width="1" height="3"/><rect x="216" y="148" width="1" height="7"/><rect x="226" y="152" width="1" height="3"/><rect x="236" y="148" width="1" height="7"/><rect x="246" y="152" width="1" height="3"/><rect x="256" y="148" width="1" height="7"/><rect x="266" y="152" width="1" height="3"/><rect x="276" y="148" width="1" height="7"/><rect x="286" y="152" width="1" height="3"/><rect x="296" y="148" width="1" height="7"/><rect x="306" y="152" width="1" height="3"/><rect x="316" y="148" width="1" height="7"/><rect x="326" y="152" width="1" height="3"/><rect x="336" y="148" width="1" height="7"/><rect x="346" y="152" width="1" height="3"/><rect x="356" y="148" width="1" height="7"/><rect x="366" y="152" width="1" height="3"/><rect x="376" y="148" width="1" height="7"/><rect x="386" y="152" width="1" height="3"/><rect x="396" y="148" width="1" height="7"/><rect x="406" y="152" width="1" height="3"/><rect x="416" y="148" width="1" height="7"/><rect x="426" y="152" width="1" height="3"/><rect x="436" y="148" width="1" height="7"/><rect x="446" y="152" width="1" height="3"/><rect x="456" y="148" width="1" height="7"/><rect x="466" y="152" width="1" height="3"/><rect x="476" y="148" width="1" height="7"/><rect x="486" y="152" width="1" height="3"/><rect x="496" y="148" width="1" height="7"/><rect x="506" y="152" width="1" height="3"/><rect x="516" y="148" width="1" height="7"/><rect x="526" y="152" width="1" height="3"/><rect x="536" y="148" width="1" height="7"/><rect x="546" y="152" width="1" height="3"/><rect x="556" y="148" width="1" height="7"/><rect x="566" y="152" width="1" height="3"/><rect x="576" y="148" width="1" height="7"/><rect x="586" y="152" width="1" height="3"/><rect x="596" y="148" width="1" height="7"/><rect x="606" y="152" width="1" height="3"/><rect x="616" y="148" width="1" height="7"/><rect x="626" y="152" width="1" height="3"/><rect x="636" y="148" width="1" height="7"/><rect x="646" y="152" width="1" height="3"/><rect x="656" y="148" width="1" height="7"/><rect x="666" y="152" width="1" height="3"/><rect x="676" y="148" width="1" height="7"/><rect x="686" y="152" width="1" height="3"/><rect x="696" y="148" width="1" height="7"/><rect x="706" y="152" width="1" height="3"/><rect x="716" y="148" width="1" height="7"/><rect x="726" y="152" width="1" height="3"/><rect x="736" y="148" width="1" height="7"/><rect x="746" y="152" width="1" height="3"/><rect x="756" y="148" width="1" height="7"/><rect x="766" y="152" width="1" height="3"/><rect x="776" y="148" width="1" height="7"/><rect x="786" y="152" width="1" height="3"/><rect x="796" y="148" width="1" height="7"/><rect x="806" y="152" width="1" height="3"/><rect x="816" y="148" width="1" height="7"/><rect x="826" y="152" width="1" height="3"/><rect x="836" y="148" width="1" height="7"/><rect x="846" y="152" width="1" height="3"/><rect x="856" y="148" width="1" height="7"/><rect x="866" y="152" width="1" height="3"/><rect x="876" y="148" width="1" height="7"/><rect x="886" y="152" width="1" height="3"/><rect x="896" y="148" width="1" height="7"/><rect x="906" y="152" width="1" height="3"/><rect x="916" y="148" width="1" height="7"/><rect x="926" y="152" width="1" height="3"/><rect x="936" y="148" width="1" height="7"/><rect x="946" y="152" width="1" height="3"/><rect x="956" y="148" width="1" height="7"/><rect x="966" y="152" width="1" height="3"/><rect x="976" y="148" width="1" height="7"/><rect x="986" y="152" width="1" height="3"/><rect x="996" y="148" width="1" height="7"/><rect x="1006" y="152" width="1" height="3"/><rect x="1016" y="148" width="1" height="7"/><rect x="1026" y="152" width="1" height="3"/><rect x="1036" y="148" width="1" height="7"/><rect x="1046" y="152" width="1" height="3"/><rect x="1056" y="148" width="1" height="7"/><rect x="1066" y="152" width="1" height="3"/><rect x="1076" y="148" width="1" height="7"/><rect x="1086" y="152" width="1" height="3"/><rect x="1096" y="148" width="1" height="7"/><rect x="1106" y="152" width="1" height="3"/><rect x="1116" y="148" width="1" height="7"/><rect x="1126" y="152" width="1" height="3"/><rect x="1136" y="148" width="1" height="7"/><rect x="88" y="723" width="7" height="1"/><rect x="92" y="713" width="3" height="1"/><rect x="88" y="703" width="7" height="1"/><rect x="92" y="693" width="3" height="1"/><rect x="88" y="683" width="7" height="1"/><rect x="92" y="673" width="3" height="1"/><rect x="88" y="663" width="7" height="1"/><rect x="92" y="653" width="3" height="1"/><rect x="88" y="643" width="7" height="1"/><rect x="92" y="633" width="3" height="1"/><rect x="88" y="623" width="7" height="1"/><rect x="92" y="613" width="3" height="1"/><rect x="88" y="603" width="7" height="1"/><rect x="92" y="593" width="3" height="1"/><rect x="88" y="583" width="7" height="1"/><rect x="92" y="573" width="3" height="1"/><rect x="88" y="563" width="7" height="1"/><rect x="92" y="553" width="3" height="1"/><rect x="88" y="543" width="7" height="1"/><rect x="92" y="533" width="3" height="1"/><rect x="88" y="523" width="7" height="1"/><rect x="92" y="513" width="3" height="1"/><rect x="88" y="503" width="7" height="1"/><rect x="92" y="493" width="3" height="1"/><rect x="88" y="483" width="7" height="1"/><rect x="92" y="473" width="3" height="1"/><rect x="88" y="463" width="7" height="1"/><rect x="92" y="453" width="3" height="1"/><rect x="88" y="443" width="7" height="1"/><rect x="92" y="433" width="3" height="1"/><rect x="88" y="423" width="7" height="1"/><rect x="92" y="413" width="3" height="1"/><rect x="88" y="403" width="7" height="1"/><rect x="92" y="393" width="3" height="1"/><rect x="88" y="383" width="7" height="1"/><rect x="92" y="373" width="3" height="1"/><rect x="88" y="363" width="7" height="1"/><rect x="92" y="353" width="3" height="1"/><rect x="88" y="343" width="7" height="1"/><rect x="92" y="333" width="3" height="1"/><rect x="88" y="323" width="7" height="1"/><rect x="92" y="313" width="3" height="1"/><rect x="88" y="303" width="7" height="1"/><rect x="92" y="293" width="3" height="1"/><rect x="88" y="283" width="7" height="1"/><rect x="92" y="273" width="3" height="1"/><rect x="88" y="263" width="7" height="1"/><rect x="92" y="253" width="3" height="1"/><rect x="88" y="243" width="7" height="1"/><rect x="92" y="233" width="3" height="1"/><rect x="88" y="223" width="7" height="1"/><rect x="92" y="213" width="3" height="1"/><rect x="88" y="203" width="7" height="1"/><rect x="92" y="193" width="3" height="1"/><rect x="88" y="183" width="7" height="1"/><rect x="92" y="173" width="3" height="1"/><rect x="88" y="163" width="7" height="1"/></g><path d="M1011 145 L1022 145 L1016.5 150.5Z" fill="#000"/><path d="M85 358 L91 363.5 L85 369Z" fill="#000"/></svg>
<div class="rl" style="left:64.3px;top:718px;transform:rotate(-90deg)">-18</div>
<div class="rl" style="left:64.3px;top:698px;transform:rotate(-90deg)">-16</div>
<div class="rl" style="left:64.3px;top:678px;transform:rotate(-90deg)">-14</div>
<div class="rl" style="left:64.3px;top:658px;transform:rotate(-90deg)">-12</div>
<div class="rl" style="left:64.3px;top:638px;transform:rotate(-90deg)">-10</div>
<div class="rl" style="left:64.3px;top:618px;transform:rotate(-90deg)">-8</div>
<div class="rl" style="left:64.3px;top:598px;transform:rotate(-90deg)">-6</div>
<div class="rl" style="left:64.3px;top:578px;transform:rotate(-90deg)">-4</div>
<div class="rl" style="left:64.3px;top:558px;transform:rotate(-90deg)">-2</div>
<div class="rl" style="left:64.3px;top:538px;transform:rotate(-90deg)">0</div>
<div class="rl" style="left:64.3px;top:518px;transform:rotate(-90deg)">2</div>
<div class="rl" style="left:64.3px;top:498px;transform:rotate(-90deg)">4</div>
<div class="rl" style="left:64.3px;top:478px;transform:rotate(-90deg)">6</div>
<div class="rl" style="left:64.3px;top:458px;transform:rotate(-90deg)">8</div>
<div class="rl" style="left:64.3px;top:438px;transform:rotate(-90deg)">10</div>
<div class="rl" style="left:64.3px;top:418px;transform:rotate(-90deg)">12</div>
<div class="rl" style="left:64.3px;top:398px;transform:rotate(-90deg)">14</div>
<div class="rl" style="left:64.3px;top:378px;transform:rotate(-90deg)">16</div>
<div class="rl" style="left:64.3px;top:358px;transform:rotate(-90deg)">18</div>
<div class="rl" style="left:64.3px;top:338px;transform:rotate(-90deg)">20</div>
<div class="rl" style="left:64.3px;top:318px;transform:rotate(-90deg)">22</div>
<div class="rl" style="left:64.3px;top:298px;transform:rotate(-90deg)">24</div>
<div class="rl" style="left:64.3px;top:278px;transform:rotate(-90deg)">26</div>
<div class="rl" style="left:64.3px;top:258px;transform:rotate(-90deg)">28</div>
<div class="rl" style="left:64.3px;top:238px;transform:rotate(-90deg)">30</div>
<div class="rl" style="left:64.3px;top:218px;transform:rotate(-90deg)">32</div>
<div class="rl" style="left:64.3px;top:198px;transform:rotate(-90deg)">34</div>
<div class="rl" style="left:64.3px;top:178px;transform:rotate(-90deg)">36</div>
<div class="rl" style="left:64.3px;top:158px;transform:rotate(-90deg)">38</div>
<svg class="a" style="left:95px;top:155px" width="1043" height="577" viewBox="0 0 1043 577"><defs><pattern id="dots" x="1" y="8" width="10" height="10" patternUnits="userSpaceOnUse"><rect width="1" height="1" fill="#444444"/></pattern></defs><rect width="1043" height="577" fill="#000"/><rect x="21" y="0" width="1" height="577" fill="#282828"/><rect x="121" y="0" width="1" height="577" fill="#282828"/><rect x="221" y="0" width="1" height="577" fill="#282828"/><rect x="321" y="0" width="1" height="577" fill="#282828"/><rect x="421" y="0" width="1" height="577" fill="#282828"/><rect x="521" y="0" width="1" height="577" fill="#282828"/><rect x="621" y="0" width="1" height="577" fill="#282828"/><rect x="721" y="0" width="1" height="577" fill="#282828"/><rect x="821" y="0" width="1" height="577" fill="#282828"/><rect x="921" y="0" width="1" height="577" fill="#282828"/><rect x="1021" y="0" width="1" height="577" fill="#282828"/><rect x="0" y="488" width="1043" height="1" fill="#282828"/><rect x="0" y="388" width="1043" height="1" fill="#282828"/><rect x="0" y="288" width="1043" height="1" fill="#282828"/><rect x="0" y="188" width="1043" height="1" fill="#282828"/><rect x="0" y="88" width="1043" height="1" fill="#282828"/><rect width="1043" height="577" fill="url(#dots)"/></svg>
<svg class="a" style="left:95px;top:155px" width="1043" height="577" viewBox="95 155 1043 577"><path d="M116.5 523 V564 M96 543.5 H137" stroke="#a00000" stroke-width="1"/><path d="M196 443.5 H1036" stroke="#ff1a1a" stroke-width="1.15" stroke-dasharray="18 6.8 1.6 6.7" stroke-dashoffset="2.3"/><path d="M316.5 323 V564 M916.5 323 V564" stroke="#ff1a1a" stroke-width="1.15" stroke-dasharray="18 6.8 1.6 6.7" stroke-dashoffset="4.2"/><circle cx="316.5" cy="443.5" r="40" fill="none" stroke="#fff" stroke-width="2.8"/><circle cx="916.5" cy="443.5" r="40" fill="none" stroke="#fff" stroke-width="2.8"/><path d="M216.5 343.5 L1016.5 363.5 M216.5 343.5 V543.5 H1016.5 V363.5" fill="none" stroke="#843c3c" stroke-width="2.6"/><text x="0" y="0" transform="translate(426 534.5) rotate(-90)" font-family="Liberation Sans" font-size="28" fill="#fff" stroke="#fff" stroke-width="0.3" letter-spacing="-0.15">104.245.02.4B</text><rect x="211.5" y="338.5" width="10" height="10" fill="#c4001c" stroke="#c8a0a4" stroke-width="1"/><rect x="211.5" y="538.5" width="10" height="10" fill="#0000b4" stroke="#9898c8" stroke-width="1"/><rect x="1011.5" y="538.5" width="10" height="10" fill="#c4001c" stroke="#c8a0a4" stroke-width="1"/><defs><radialGradient id="ring" cx="0.5" cy="0.5" r="0.5"><stop offset="0.76" stop-color="#2a343c" stop-opacity="0"/><stop offset="0.8" stop-color="#34404a"/><stop offset="0.85" stop-color="#4a5866"/><stop offset="0.89" stop-color="#5e6e7e"/><stop offset="0.92" stop-color="#526270"/><stop offset="0.95" stop-color="#687a8a"/><stop offset="0.975" stop-color="#56646e"/><stop offset="1" stop-color="#3a4650" stop-opacity="0"/></radialGradient></defs><circle cx="1018" cy="365" r="40" fill="url(#ring)" opacity="0.8"/><circle cx="1016.5" cy="343.5" r="5" fill="none" stroke="#b00000" stroke-width="1"/><path d="M1016.5 337 V350 M1010 343.5 H1023" stroke="#b00000" stroke-width="1"/><rect x="1011.5" y="358.5" width="10" height="10" fill="#6a0018" stroke="#d8d0d0" stroke-width="1"/><path d="M1018 364 L1018 387.5 L1023.3 382.6 L1028.2 393 L1032.3 391.2 L1027.6 381.3 L1034.8 380.8 Z" fill="#fff" stroke="#222" stroke-width="1.1" stroke-linejoin="round"/></svg>
<div class="a" style="left:1138px;top:155px;width:16px;height:577px;background:#f8f8f8"></div>
<div class="a" style="left:1143px;top:285px;width:8px;height:316px;border-radius:4px;background:#7f7f7f"></div>
<div class="a" style="left:95px;top:732px;width:1059px;height:16px;background:#f8f8f8"></div>
<div class="a" style="left:72px;top:732px;width:23px;height:16px;background:#ececec"></div>
<div class="a" style="left:281px;top:737px;width:633px;height:8px;border-radius:4px;background:#7f7f7f"></div>
<div class="a" style="left:1099px;top:732px;width:55px;height:16px;background:#ececec"></div>
<div class="a" style="left:1099px;top:733px;width:54px;height:16px;font-size:12.5px;line-height:16px;text-align:right;color:#111;-webkit-text-stroke:0.25px #111">1 &lt; 10</div>
<div class="a" style="left:1154px;top:108px;width:2px;height:690px;background:#c0c0c0"></div>
<div class="a" style="left:72px;top:748px;width:1082px;height:2px;background:#c2c2c2"></div>
<div class="a" style="left:72px;top:750px;width:1082px;height:20px;background:#fff"></div>
<div class="a" style="left:77px;top:750.5px;font-size:13px;line-height:16px;color:#1515d0;-webkit-text-stroke:0.2px #1515d0"><i>Command:</i> new</div>
<div class="a" style="left:72px;top:770px;width:1082px;height:1px;background:#bdbdbd"></div>
<div class="a" style="left:72px;top:771px;width:1082px;height:27px;background:#ececec"></div>
<div class="a" style="left:73px;top:777px;font-size:13px;line-height:16px;color:#111;-webkit-text-stroke:0.25px #111">Command:</div>
<div class="a" style="left:142px;top:776px;width:985px;height:18px;background:#fff"></div>
<div class="a" style="left:1127px;top:772px;width:26px;height:26px;background:linear-gradient(#f2f2f2,#e4e4e4);border:1px solid #c0c0c0"></div>
<svg class="a" style="left:1132px;top:779px" width="16" height="13"><rect x="1.5" y="1.5" width="13" height="9" fill="#f4f4f4" stroke="#222" stroke-width="1"/><rect x="1" y="1" width="14" height="3" fill="#111"/></svg>
<div class="a" style="left:1156px;top:108px;width:298px;height:22px;background:linear-gradient(#ececec,#dadada)"></div>
<svg class="a" style="left:1156px;top:110px" width="36" height="16"><circle cx="8" cy="8" r="7" fill="#5e5e5e"/><path d="M5.2 5.2 L10.8 10.8 M10.8 5.2 L5.2 10.8" stroke="#e8e8e8" stroke-width="1.7"/><circle cx="26" cy="8" r="7" fill="#5e5e5e"/><rect x="22.8" y="7.8" width="5.2" height="4" fill="none" stroke="#f0f0f0" stroke-width="1.2"/><path d="M24.6 7.6 V5.6 H29.6 V9.6 H28.2" fill="none" stroke="#f0f0f0" stroke-width="1.2"/></svg>
<div class="a" style="left:1296.5px;top:111.5px;font-size:12px;line-height:16px;color:#222;-webkit-text-stroke:0.2px #222">Layer List</div>
<div class="a" style="left:1156px;top:130px;width:298px;height:26px;background:#ababab"></div>
<div class="a" style="left:1156px;top:131.5px;width:59.5px;height:23.5px;background:linear-gradient(#e4e4e4,#f2f2f2 55%,#f4f4f4)"></div>
<div class="a" style="left:1217px;top:131.5px;width:58.5px;height:23.5px;background:linear-gradient(#e4e4e4,#f2f2f2 55%,#f4f4f4)"></div>
<div class="a" style="left:1277px;top:131.5px;width:57.5px;height:23.5px;background:linear-gradient(#e4e4e4,#f2f2f2 55%,#f4f4f4)"></div>
<div class="a" style="left:1336px;top:131.5px;width:58.5px;height:23.5px;background:linear-gradient(#e4e4e4,#f2f2f2 55%,#f4f4f4)"></div>
<div class="a" style="left:1396px;top:131.5px;width:57.5px;height:23.5px;background:linear-gradient(#e4e4e4,#f2f2f2 55%,#f4f4f4)"></div>
<svg class="a" style="left:1177px;top:137px" width="16" height="12" viewBox="0 0 16 12"><path d="M0.5 5.5 C2 1 6 0 9 0.5 C12 1 14.5 3 15.5 5.5 C14.5 9 11 11.5 8 11.5 C4.5 11.5 1.5 9 0.5 5.5Z" fill="#000"/><path d="M3 6 C4 9.5 12 9.5 13 6 C12.5 8 11 5 8 5 C5 5 3.5 8 3 6Z" fill="#fff"/><path d="M3.2 5.8 C3.5 9.6 12.5 9.6 12.8 5.8 C12 3 4 3 3.2 5.8Z" fill="#fff"/><circle cx="8" cy="5.3" r="3" fill="#000"/><circle cx="7.3" cy="4.6" r="0.8" fill="#fff"/></svg>
<svg class="a" style="left:1237px;top:137px" width="16" height="12" viewBox="0 0 16 12"><path d="M0.5 5.5 C2 1 6 0 9 0.5 C12 1 14.5 3 15.5 5.5 C14.5 9 11 11.5 8 11.5 C4.5 11.5 1.5 9 0.5 5.5Z" fill="#a8a8a8"/><path d="M3 6 C4 9.5 12 9.5 13 6 C12.5 8 11 5 8 5 C5 5 3.5 8 3 6Z" fill="#fff"/><path d="M3.2 5.8 C3.5 9.6 12.5 9.6 12.8 5.8 C12 3 4 3 3.2 5.8Z" fill="#fff"/><circle cx="8" cy="5.3" r="3" fill="#a8a8a8"/><circle cx="7.3" cy="4.6" r="0.8" fill="#fff"/></svg>
<svg class="a" style="left:1296px;top:135px" width="18" height="16"><path d="M9 1.8 V14.2 M2.7 8 H15.3" stroke="#e80000" stroke-width="3"/></svg>
<svg class="a" style="left:1356px;top:135px" width="18" height="16"><path d="M3 8 H15.5" stroke="#e80000" stroke-width="3"/></svg>
<svg class="a" style="left:1417px;top:135px" width="16" height="16" viewBox="0 0 16 16"><path d="M1 15 L3 10 L12 1.5 L14.5 4 L6 12.5Z" fill="#dca040" stroke="#6e4a18" stroke-width="0.8"/><path d="M12 1.5 L14.5 4 L15.5 3 L13 0.5Z" fill="#e03030"/><path d="M1 15 L3 10 L6 12.5Z" fill="#f0d8a0"/></svg>
<div class="a" style="left:1156px;top:156px;width:298px;height:642px;background:#fff;border-top:1px solid #c4c4c4"></div>
<div class="a" style="left:1161px;top:163px;width:16px;height:9px;background:#fff;border:1.5px solid #000"></div>
<div class="a" style="left:1183px;top:159.5px;font-size:13px;line-height:16px;color:#000;-webkit-text-stroke:0.3px #000">0</div>
<svg class="a" style="left:1415px;top:161px" width="16" height="12" viewBox="0 0 16 12"><path d="M0.5 5.5 C2 1 6 0 9 0.5 C12 1 14.5 3 15.5 5.5 C14.5 9 11 11.5 8 11.5 C4.5 11.5 1.5 9 0.5 5.5Z" fill="#000"/><path d="M3 6 C4 9.5 12 9.5 13 6 C12.5 8 11 5 8 5 C5 5 3.5 8 3 6Z" fill="#fff"/><path d="M3.2 5.8 C3.5 9.6 12.5 9.6 12.8 5.8 C12 3 4 3 3.2 5.8Z" fill="#fff"/><circle cx="8" cy="5.3" r="3" fill="#000"/><circle cx="7.3" cy="4.6" r="0.8" fill="#fff"/></svg>
<svg class="a" style="left:1439px;top:160px" width="12" height="14" viewBox="0 0 12 14"><path d="M2.5 7 V4.5 A3.5 3.5 0 0 1 9.5 4.5 V7" fill="none" stroke="#b4b4b4" stroke-width="1.4"/><rect x="1" y="7" width="10" height="7" fill="#b4b4b4"/></svg>
<div class="a" style="left:1161px;top:183px;width:16px;height:9px;background:#ff0000;border:1.5px solid #000"></div>
<div class="a" style="left:1183px;top:179.5px;font-size:13px;line-height:16px;color:#000;-webkit-text-stroke:0.3px #000">Center</div>
<svg class="a" style="left:1415px;top:181px" width="16" height="12" viewBox="0 0 16 12"><path d="M0.5 5.5 C2 1 6 0 9 0.5 C12 1 14.5 3 15.5 5.5 C14.5 9 11 11.5 8 11.5 C4.5 11.5 1.5 9 0.5 5.5Z" fill="#000"/><path d="M3 6 C4 9.5 12 9.5 13 6 C12.5 8 11 5 8 5 C5 5 3.5 8 3 6Z" fill="#fff"/><path d="M3.2 5.8 C3.5 9.6 12.5 9.6 12.8 5.8 C12 3 4 3 3.2 5.8Z" fill="#fff"/><circle cx="8" cy="5.3" r="3" fill="#000"/><circle cx="7.3" cy="4.6" r="0.8" fill="#fff"/></svg>
<svg class="a" style="left:1439px;top:180px" width="12" height="14" viewBox="0 0 12 14"><path d="M2.5 7 V4.5 A3.5 3.5 0 0 1 9.5 4.5 V7" fill="none" stroke="#b4b4b4" stroke-width="1.4"/><rect x="1" y="7" width="10" height="7" fill="#b4b4b4"/></svg>
<div class="a" style="left:1161px;top:203px;width:16px;height:9px;background:#000;border:1.5px solid #000"></div>
<div class="a" style="left:1183px;top:199.5px;font-size:13px;line-height:16px;color:#000;-webkit-text-stroke:0.3px #000">Hidden</div>
<svg class="a" style="left:1415px;top:201px" width="16" height="12" viewBox="0 0 16 12"><path d="M0.5 5.5 C2 1 6 0 9 0.5 C12 1 14.5 3 15.5 5.5 C14.5 9 11 11.5 8 11.5 C4.5 11.5 1.5 9 0.5 5.5Z" fill="#000"/><path d="M3 6 C4 9.5 12 9.5 13 6 C12.5 8 11 5 8 5 C5 5 3.5 8 3 6Z" fill="#fff"/><path d="M3.2 5.8 C3.5 9.6 12.5 9.6 12.8 5.8 C12 3 4 3 3.2 5.8Z" fill="#fff"/><circle cx="8" cy="5.3" r="3" fill="#000"/><circle cx="7.3" cy="4.6" r="0.8" fill="#fff"/></svg>
<svg class="a" style="left:1439px;top:200px" width="12" height="14" viewBox="0 0 12 14"><path d="M2.5 7 V4.5 A3.5 3.5 0 0 1 9.5 4.5 V7" fill="none" stroke="#b4b4b4" stroke-width="1.4"/><rect x="1" y="7" width="10" height="7" fill="#b4b4b4"/></svg>
<div class="a" style="left:1161px;top:223px;width:16px;height:9px;background:#fff;border:1.5px solid #000"></div>
<div class="a" style="left:1183px;top:219.5px;font-size:13px;line-height:16px;color:#000;-webkit-text-stroke:0.3px #000">Visible</div>
<svg class="a" style="left:1415px;top:221px" width="16" height="12" viewBox="0 0 16 12"><path d="M0.5 5.5 C2 1 6 0 9 0.5 C12 1 14.5 3 15.5 5.5 C14.5 9 11 11.5 8 11.5 C4.5 11.5 1.5 9 0.5 5.5Z" fill="#000"/><path d="M3 6 C4 9.5 12 9.5 13 6 C12.5 8 11 5 8 5 C5 5 3.5 8 3 6Z" fill="#fff"/><path d="M3.2 5.8 C3.5 9.6 12.5 9.6 12.8 5.8 C12 3 4 3 3.2 5.8Z" fill="#fff"/><circle cx="8" cy="5.3" r="3" fill="#000"/><circle cx="7.3" cy="4.6" r="0.8" fill="#fff"/></svg>
<svg class="a" style="left:1439px;top:220px" width="12" height="14" viewBox="0 0 12 14"><path d="M2.5 7 V4.5 A3.5 3.5 0 0 1 9.5 4.5 V7" fill="none" stroke="#b4b4b4" stroke-width="1.4"/><rect x="1" y="7" width="10" height="7" fill="#b4b4b4"/></svg>
<svg class="a" style="left:1393px;top:219px" width="16" height="16" viewBox="0 0 16 16"><path d="M1 15 L3 10 L12 1.5 L14.5 4 L6 12.5Z" fill="#dca040" stroke="#6e4a18" stroke-width="0.8"/><path d="M12 1.5 L14.5 4 L15.5 3 L13 0.5Z" fill="#e03030"/><path d="M1 15 L3 10 L6 12.5Z" fill="#f0d8a0"/></svg>
<div class="a" style="left:1454px;top:108px;width:46px;height:690px;background:linear-gradient(90deg,#c4c4c4 0 1px,#f4f4f4 1px 2px,#eaeaea 2px,#cecece 95%,#bcbcbc 95%)"></div>
<div class="a" style="left:1463px;top:116px;width:2px;height:2px;background:#a0a0a0"></div>
<div class="a" style="left:1469px;top:116px;width:2px;height:2px;background:#a0a0a0"></div>
<div class="a" style="left:1475px;top:116px;width:2px;height:2px;background:#a0a0a0"></div>
<div class="a" style="left:1481px;top:116px;width:2px;height:2px;background:#a0a0a0"></div>
<div class="a" style="left:1487px;top:116px;width:2px;height:2px;background:#a0a0a0"></div>
<div class="a" style="left:1456px;top:120px;width:48px;height:42.5px;border-radius:5px;background:#b6b6b6"></div>
<div class="a" style="left:1456px;top:417px;width:48px;height:42.5px;border-radius:5px;background:#b6b6b6"></div>
<div class="a" style="left:1458px;top:261px;width:40px;height:1px;background:repeating-linear-gradient(90deg,#6a6a6a 0 1px,transparent 1px 3px)"></div>
<div class="a" style="left:1458px;top:409px;width:40px;height:1px;background:repeating-linear-gradient(90deg,#6a6a6a 0 1px,transparent 1px 3px)"></div>
<svg class="a" style="left:1463px;top:127px" width="28" height="28" viewBox="0 0 28 28"><rect x="0.5" y="0.5" width="27" height="27" fill="#fff" stroke="#111" stroke-width="1"/><rect x="0" y="0" width="28" height="4" fill="#000"/><rect x="1" y="1" width="3" height="3" fill="#fff"/><path d="M8 12 L14 9 L14 20 L8 23Z" fill="#eee" stroke="#333" stroke-width="0.8"/><path d="M11 11 L19 8 L19 19 L11 22Z" fill="#ddd" stroke="#333" stroke-width="0.8"/><path d="M14 19 L18 12 L17 19Z" fill="none" stroke="#e02020" stroke-width="0.8"/></svg>
<svg class="a" style="left:1463px;top:174px" width="28" height="28" viewBox="0 0 28 28"><rect x="0.5" y="0.5" width="27" height="27" fill="#fff" stroke="#111" stroke-width="1"/><rect x="0" y="0" width="28" height="4" fill="#000"/><rect x="1" y="1" width="3" height="3" fill="#fff"/><rect x="7" y="9" width="10" height="8" fill="#f8e8b8" stroke="#333" stroke-width="0.8"/><circle cx="16" cy="18" r="4.5" fill="#f8e8b8" stroke="#333" stroke-width="0.8"/></svg>
<svg class="a" style="left:1463px;top:220px" width="28" height="28" viewBox="0 0 28 28"><rect x="0.5" y="0.5" width="27" height="27" fill="#fff" stroke="#111" stroke-width="1"/><rect x="0" y="0" width="28" height="4" fill="#000"/><rect x="1" y="1" width="3" height="3" fill="#fff"/><rect x="5" y="9" width="18" height="13" rx="2" fill="#f4f4f4" stroke="#b8c8e0" stroke-width="1"/></svg>
<svg class="a" style="left:1463px;top:276px" width="28" height="28" viewBox="0 0 28 28"><rect x="0.5" y="0.5" width="27" height="27" fill="#fff" stroke="#111" stroke-width="1"/><rect x="0" y="0" width="28" height="4" fill="#000"/><rect x="1" y="1" width="3" height="3" fill="#fff"/><rect x="5" y="9" width="4" height="3" fill="#111"/><rect x="5" y="15" width="4" height="3" fill="#111"/><rect x="5" y="21" width="4" height="3" fill="#111"/><rect x="11" y="9" width="12" height="3" fill="#fff" stroke="#333" stroke-width="0.8"/><rect x="11" y="15" width="12" height="3" fill="#fff" stroke="#333" stroke-width="0.8"/><rect x="11" y="21" width="12" height="3" fill="#fff" stroke="#333" stroke-width="0.8"/></svg>
<svg class="a" style="left:1463px;top:322px" width="28" height="28" viewBox="0 0 28 28"><rect x="0.5" y="0.5" width="27" height="27" fill="#fff" stroke="#111" stroke-width="1"/><rect x="0" y="0" width="28" height="4" fill="#000"/><rect x="1" y="1" width="3" height="3" fill="#fff"/><path d="M6 8 L22 8 L15 16 L15 23 L13 23 L13 16Z" fill="#aaa" stroke="#333" stroke-width="0.8"/></svg>
<svg class="a" style="left:1463px;top:368px" width="28" height="28" viewBox="0 0 28 28"><rect x="0.5" y="0.5" width="27" height="27" fill="#fff" stroke="#111" stroke-width="1"/><rect x="0" y="0" width="28" height="4" fill="#000"/><rect x="1" y="1" width="3" height="3" fill="#fff"/><path d="M6 9 L6 22 L12 17 L12 13Z" fill="#fff" stroke="#333" stroke-width="0.8"/><rect x="12" y="12" width="10" height="6" fill="#bbb" stroke="#333" stroke-width="0.6"/><path d="M3 15.5 H25" stroke="#e06060" stroke-width="0.6" stroke-dasharray="2 1"/></svg>
<svg class="a" style="left:1463px;top:424px" width="28" height="28" viewBox="0 0 28 28"><rect x="0.5" y="0.5" width="27" height="27" fill="#fff" stroke="#111" stroke-width="1"/><rect x="0" y="0" width="28" height="4" fill="#000"/><rect x="1" y="1" width="3" height="3" fill="#fff"/><path d="M4 9 H15 M4 12 H14 M4 15 H17 M4 18 H17" stroke="#777" stroke-width="0.8" stroke-dasharray="2 0.6"/><path d="M1 23 H27" stroke="#333" stroke-width="0.7"/><path d="M4 25.5 H6 M10 25.5 H24" stroke="#444" stroke-width="0.9"/></svg>
<svg class="a" style="left:1463px;top:471px" width="28" height="28" viewBox="0 0 28 28"><rect x="0.5" y="0.5" width="27" height="27" fill="#fff" stroke="#111" stroke-width="1"/><rect x="0" y="0" width="28" height="4" fill="#000"/><rect x="1" y="1" width="3" height="3" fill="#fff"/><rect x="7.5" y="9" width="13" height="15" rx="1" fill="#c88a30" stroke="#8a5a20" stroke-width="0.6"/><rect x="9" y="10.5" width="10" height="12" fill="#f4f4f4"/><path d="M10.5 14 H17.5 M10.5 16 H17.5 M10.5 18 H16" stroke="#c8c8c8" stroke-width="0.8"/><path d="M16 22.5 L19 19.5 V22.5Z" fill="#b0b0b0"/><rect x="10.5" y="7.5" width="7" height="3" rx="1" fill="#9a9a90"/></svg>
<div class="a" style="left:0;top:798px;width:1500px;height:46px;background:#dcdcdc;border-top:1px solid #c8c8c8"></div>
<div class="sb" style="left:2px;top:807px">90,18</div>
<div class="sb" style="left:2px;top:827px">@0,-2</div>
<div class="a" style="left:253px;top:802px;width:1px;height:42px;background:#9c9c9c"></div>
<div class="sb" style="left:256px;top:807px">91.7824&lt;11°</div>
<div class="sb" style="left:256px;top:827px">@2&lt;270°</div>
<div class="a" style="left:506.5px;top:818.5px;width:6px;height:6px;border-radius:3px;background:#c4c4c4"></div>
<div class="sb" style="left:500px;top:811px;width:198.5px;text-align:right">Select entity or region</div>
<div class="sb" style="left:500px;top:822px;width:198.5px;text-align:right">Move entity or reference</div>
<svg class="a" style="left:716px;top:805px" width="20" height="32" viewBox="0 0 20 32"><path d="M10 1 C4 1 1.5 5 1.5 10 V22 C1.5 28 5 31 10 31 C15 31 18.5 28 18.5 22 V10 C18.5 5 16 1 10 1Z" fill="#fff" stroke="#333" stroke-width="1"/><path d="M1.5 13 H18.5 M10 1 V13" stroke="#333" stroke-width="1"/><rect x="8.2" y="4" width="3.6" height="7" rx="1.8" fill="#fff" stroke="#333" stroke-width="0.9"/></svg>
<div class="a" style="left:940.5px;top:818.5px;width:6px;height:6px;border-radius:3px;background:#c4c4c4"></div>
<div class="sb" style="left:949px;top:811px">Selected entities:</div>
<div class="sb" style="left:949px;top:822px">4 Lines on Layer "Visible".</div>
<div class="a" style="left:1269px;top:818.5px;width:6px;height:6px;border-radius:3px;background:#c4c4c4"></div>
</body></html>
